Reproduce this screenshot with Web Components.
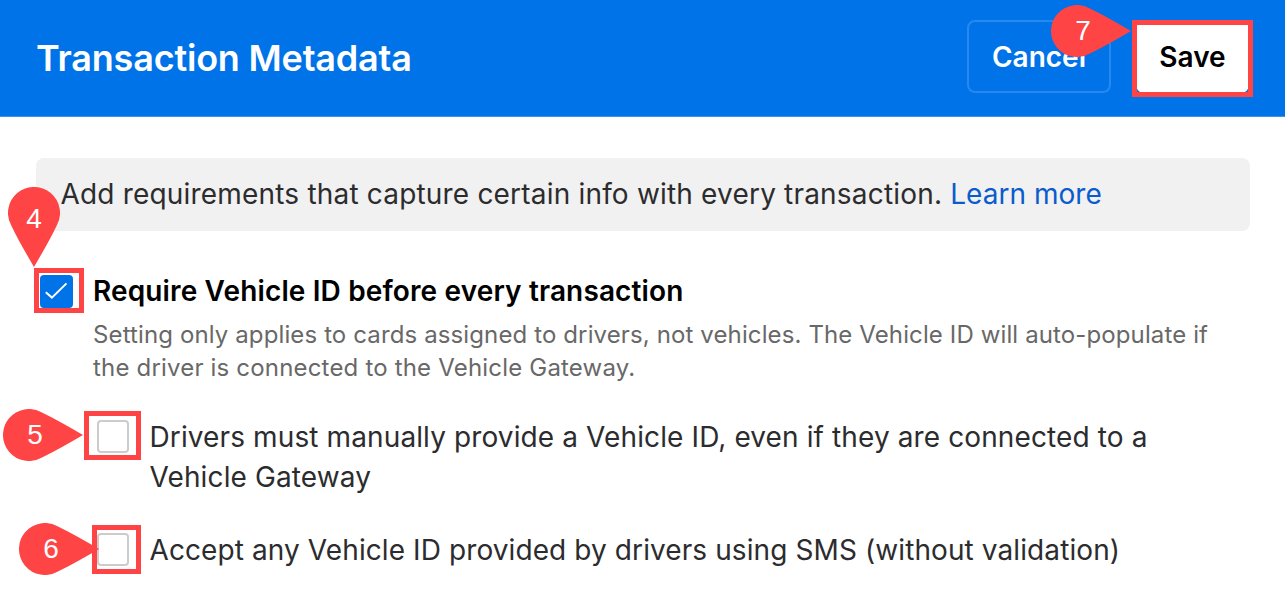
<!DOCTYPE html>
<html lang="en"><head><meta charset="utf-8"><title>Transaction Metadata</title>
<style>
body{margin:0;background:#fff;font-family:Inter,"Liberation Sans",sans-serif;width:1285px;height:596px;overflow:hidden}
</style></head><body>
<metadata-page></metadata-page>
<script>
const define=(name,html)=>customElements.define(name,class extends HTMLElement{
  constructor(){super();this.attachShadow({mode:'open'}).innerHTML=html;}
});

define('action-button',`<style>
:host{display:flex;box-sizing:border-box;height:73px;align-items:center;justify-content:center;border:2px solid #2689ee;border-radius:8px;color:#fff;font-size:28px;line-height:34px;font-weight:600;white-space:nowrap}
:host([primary]){background:#fff;color:#000;border-color:#fff}
</style><span><slot></slot></span>`);

define('page-header',`<style>
:host{display:flex;box-sizing:border-box;height:117px;padding:20px 36px 0 36px;background:#0073e8;align-items:flex-start;border-bottom:1px solid #3a93ee}
h1{margin:16px auto 0 0;font-size:36px;line-height:44px;font-weight:600;color:#fff;white-space:nowrap;letter-spacing:-.2px}
.actions{display:flex;gap:25px}
</style><h1><slot></slot></h1><div class="actions"><slot name="actions"></slot></div>`);

define('info-banner',`<style>
:host{display:flex;box-sizing:border-box;height:73px;align-items:center;padding:0 0 2px 24.5px;background:#f1f1f1;border-radius:8px;font-size:28px;line-height:34px;color:#2c2c2e;white-space:nowrap;letter-spacing:.187px}
</style><span><slot></slot></span>`);

define('check-box',`<style>
:host{display:block;box-sizing:border-box;width:32px;height:33px;border:2px solid #ccc;border-radius:4px;background:#fff;flex:none}
svg{display:none}
:host([checked]){width:33px;background:#0073e8;border-color:#0073e8}
:host([checked]) svg{display:block;margin:-2px}
</style><svg width="33" height="33" viewBox="0 0 33 33"><path d="M5.8 17.2 11.9 22.6 26.5 8.4" fill="none" stroke="#fff" stroke-width="2"/></svg>`);

define('setting-row',`<style>
:host{display:flex;align-items:flex-start;font-size:28px;line-height:40px;color:#2c2c2e}
.text{white-space:nowrap}
</style><slot name="control"></slot><div class="text"><slot></slot></div>`);

define('focus-frame',`<style>
:host{position:absolute;box-sizing:border-box;border:5px solid #fe4444;left:var(--x);top:var(--y);width:var(--w);height:var(--h)}
</style>`);

define('step-pin',`<style>
:host{position:absolute;left:var(--x);top:var(--y);width:80px;height:52px}
svg{display:block;transform-origin:26px 26px}
:host([down]) svg{transform:rotate(90deg)}
span{position:absolute;left:12px;top:10px;width:40px;text-align:center;color:#fff;font:28px/32px "Liberation Sans",Arial,sans-serif}
:host([down]) span{left:6px;top:16px}
</style><svg width="80" height="52" viewBox="0 0 80 52"><path d="M80 26C66 34 53 42 39 48.5A26 26 0 1 1 39 3.5C53 10 66 18 80 26Z" fill="#fe4444"/></svg><span><slot></slot></span>`);

define('metadata-page',`<style>
:host{display:block;position:relative;width:1285px;height:596px;background:#fff}
main{display:flex;flex-direction:column;padding:41px 35px 0 36px}
a{color:#0a5ccc;text-decoration:none;letter-spacing:.03px}
.cancel{width:144px}.save{width:113px}
.r1{margin:44px 0 0 4px}
.r1 b{display:block;font-weight:600;font-size:28px;line-height:34px;color:#000;letter-spacing:.135px;margin-top:-1px}
.r1 small{display:block;margin-top:11px;font-size:24px;line-height:32.5px;color:#686868;letter-spacing:.12px}
.g2{letter-spacing:.185px}
.r1 check-box{margin-right:20px}
.r2,.r3{margin-left:61px}
.r2{margin-top:33px;letter-spacing:.115px}.r3{margin-top:33px;letter-spacing:.095px}
.r2 check-box,.r3 check-box{margin:3px 20.5px 0 0}
</style>
<page-header>Transaction Metadata<action-button slot="actions" class="cancel">Cancel</action-button><action-button slot="actions" class="save" primary>Save</action-button></page-header>
<main>
<info-banner>Add requirements that capture certain info with every transaction. <a href="#">Learn more</a></info-banner>
<setting-row class="r1"><check-box slot="control" checked></check-box><b>Require Vehicle ID before every transaction</b><small>Setting only applies to cards assigned to drivers, not vehicles. The Vehicle ID will auto-populate if<br><span class="g2">the driver is connected to the Vehicle Gateway.</span></small></setting-row>
<setting-row class="r2"><check-box slot="control"></check-box>Drivers must manually provide a Vehicle ID, even if they are connected to a<br>Vehicle Gateway</setting-row>
<setting-row class="r3"><check-box slot="control"></check-box>Accept any Vehicle ID provided by drivers using SMS (without validation)</setting-row>
</main>
<focus-frame style="--x:1132px;--y:20px;--w:121px;--h:77px"></focus-frame>
<focus-frame style="--x:34px;--y:268px;--w:50px;--h:45px"></focus-frame>
<focus-frame style="--x:84px;--y:411px;--w:57px;--h:49px"></focus-frame>
<focus-frame style="--x:92px;--y:525px;--w:49px;--h:49px"></focus-frame>
<step-pin style="--x:1051px;--y:5px">7</step-pin>
<step-pin down style="--x:8px;--y:187px">4</step-pin>
<step-pin style="--x:3px;--y:409px">5</step-pin>
<step-pin style="--x:19px;--y:523px">6</step-pin>`);
</script></body></html>
